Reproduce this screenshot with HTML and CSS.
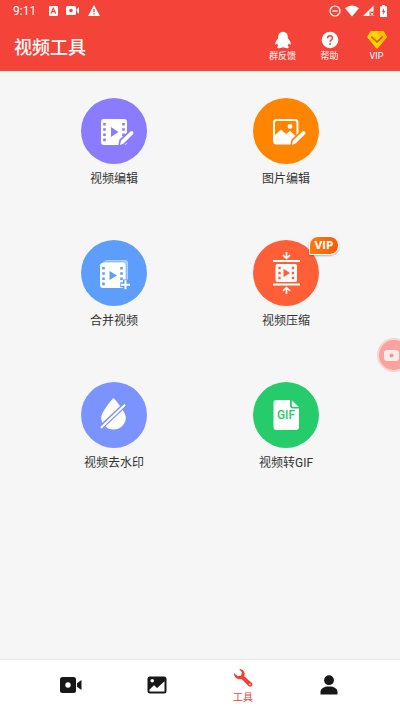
FILE: index.html
```html
<!DOCTYPE html>
<html lang="zh-CN">
<head>
<meta charset="utf-8">
<meta name="viewport" content="width=device-width, initial-scale=1">
<title>视频工具</title>
<link rel="stylesheet" href="styles.css">
</head>
<body>
<header class="header">
  <div class="status">
    <div class="status-left">
      <span class="time">9:11</span>
      <svg width="10" height="12" viewBox="0 0 10 12"><rect x="1" y="1" width="9" height="10" rx="1" fill="#fff"/><path d="M3 8.5 5.3 3.2 7.8 8.5M4 6.6H7" fill="none" stroke="#f44338" stroke-width="1.1"/></svg>
      <svg width="14" height="12" viewBox="0 0 14 12"><rect x="0" y="1" width="10" height="9" rx="1.5" fill="#fff"/><circle cx="5" cy="5.5" r="1.8" fill="#f44338"/><path d="M10.8 4.2 13 2V9L10.8 6.8Z" fill="#fff"/></svg>
      <svg width="12" height="12" viewBox="0 0 12 12"><path d="M6 0 12 11H0Z" fill="#fff"/><path d="M6 4V7.2M6 8.2V9.6" stroke="#f44338" stroke-width="1.3"/></svg>
    </div>
    <div class="status-right">
      <svg width="12" height="12" viewBox="0 0 12 12"><circle cx="6" cy="6" r="5" fill="none" stroke="#fff" stroke-width="1.2"/><path d="M3.4 6H8.6" stroke="#fff" stroke-width="1.3"/></svg>
      <svg width="14" height="12" viewBox="0 0 14 12"><path d="M0 3.2Q7-2 14 3.2L7 11.5Z" fill="#fff"/></svg>
      <svg width="11" height="12" viewBox="0 0 11 12"><path d="M10.5 0.5V6.5H6.5V11H0Z" fill="#fff"/><path d="M7.6 7.7 10.4 10.8M10.4 7.7 7.6 10.8" stroke="#fff" stroke-width="1"/></svg>
      <svg class="battery" width="7" height="12" viewBox="0 0 7 12"><path d="M2.2 0H4.8V1.2H6.2Q7 1.2 7 2V11.2Q7 12 6.2 12H.8Q0 12 0 11.2V2Q0 1.2.8 1.2H2.2Z" fill="#fff"/><path d="M4 3 2 7H3.2V10L5.2 6H4Z" fill="#f44338"/></svg>
    </div>
  </div>
  <div class="appbar">
    <h1>视频工具</h1>
    <div class="actions">
      <button class="action" type="button">
        <svg width="18" height="18" viewBox="0 0 18 18"><path d="M9 .8C5.8.8 4.2 3 4.2 5.6V7.2C3 8.7 1 11 1.2 13.2 1.4 14.2 2.5 13.4 3.2 12.2 3.4 13.2 3.8 14 4.5 14.7 2.7 15.5 2.7 17.2 5 17.2 7 17.2 8.2 16.6 9 16.1 9.8 16.6 11 17.2 13 17.2 15.3 17.2 15.3 15.5 13.5 14.7 14.2 14 14.6 13.2 14.8 12.2 15.5 13.4 16.6 14.2 16.8 13.2 17 11 15 8.7 13.8 7.2V5.6C13.8 3 12.2.8 9 .8Z" fill="#fff"/></svg>
        <span>群反馈</span>
      </button>
      <button class="action" type="button">
        <svg width="18" height="18" viewBox="0 0 18 18"><circle cx="9" cy="9" r="8.3" fill="#fff"/><path d="M6.6 7.2C6.6 4 11.5 4.1 11.5 7 11.5 8.8 9.1 8.8 9.1 10.8" fill="none" stroke="#f44338" stroke-width="1.5"/><circle cx="9.1" cy="12.9" r="1" fill="#f44338"/></svg>
        <span>帮助</span>
      </button>
      <button class="action" type="button">
        <svg width="20" height="18" viewBox="0 0 20 18"><path d="M4.4 0H15.6Q16.4 0 16.8.6L19.4 5Q20 6 19.2 6.9L11 17Q10 18 9 17L.8 6.9Q0 6 .6 5L3.2.6Q3.6 0 4.4 0Z" fill="#ffd400"/><path d="M11 0H15.6Q16.4 0 16.8.6L19.4 5Q20 6 19.2 6.9L14 13Z" fill="#ffbd00"/><path d="M4.8 6 10 11 15.2 6" fill="none" stroke="#d9541a" stroke-width="1.7" stroke-linecap="round" stroke-linejoin="round"/></svg>
        <span>VIP</span>
      </button>
    </div>
  </div>
</header>

<main class="tools">
  <a class="tool" href="#edit-video">
    <span class="disc violet">
      <svg viewBox="0 0 66 66"><rect x="20" y="21" width="26" height="26" rx="3" fill="#fff"/><path d="M23.5 25V44M42.5 25V38" stroke="#8a7bff" stroke-width="2.6" stroke-dasharray="2.6 2.6"/><path d="M30 29 37.5 34 30 39Z" fill="#8a7bff"/><path d="M39 47 40 42.5 49.5 33.5Q51 32.5 52 33.8 53 35 52 36.2L42.5 45.5Z" fill="#fff" stroke="#8a7bff" stroke-width="3.4"/><path d="M39 47 40 42.5 49.5 33.5Q51 32.5 52 33.8 53 35 52 36.2L42.5 45.5Z" fill="#fff"/></svg>
    </span>
    <span class="label">视频编辑</span>
  </a>
  <a class="tool" href="#edit-image">
    <span class="disc orange">
      <svg viewBox="0 0 66 66"><rect x="21" y="22" width="23.5" height="23.5" rx="2.5" fill="none" stroke="#fff" stroke-width="2"/><path d="M21 38 28 31.5 33 36 37 33 44 39V45H21Z" fill="#fff"/><circle cx="37" cy="28.5" r="2.4" fill="#fff"/><path d="M39 47 40 42.5 49.5 33.5Q51 32.5 52 33.8 53 35 52 36.2L42.5 45.5Z" fill="#fff" stroke="#ff8400" stroke-width="3.4"/><path d="M39 47 40 42.5 49.5 33.5Q51 32.5 52 33.8 53 35 52 36.2L42.5 45.5Z" fill="#fff"/></svg>
    </span>
    <span class="label">图片编辑</span>
  </a>
  <a class="tool" href="#merge">
    <span class="disc blue">
      <svg viewBox="0 0 66 66"><rect x="23" y="20" width="24" height="24" rx="3" fill="#b0d0ff"/><rect x="21" y="21.5" width="24.5" height="24.5" rx="3" fill="#d3e5ff" stroke="#5d9efc" stroke-width=".5"/><rect x="19" y="23" width="25" height="25" rx="3" fill="#fff"/><path d="M22.5 27V46M40.5 27V41" stroke="#5d9efc" stroke-width="2.6" stroke-dasharray="2.6 2.6"/><path d="M28.5 31 36 35.5 28.5 40Z" fill="#5d9efc"/><path d="M44.5 39.5V50M39.3 44.8H49.7" stroke="#5d9efc" stroke-width="5"/><path d="M44.5 40.2V49.2M40 44.7H49" stroke="#fff" stroke-width="2"/></svg>
    </span>
    <span class="label">合并视频</span>
  </a>
  <a class="tool" href="#compress">
    <span class="disc coral">
      <svg viewBox="0 0 66 66"><path d="M20 21H47M20 44.5H47" stroke="#fff" stroke-width="2"/><path d="M33.5 12V18M30 15.2 33.5 18.5 37 15.2M33.5 54V48M30 50.8 33.5 47.5 37 50.8" fill="none" stroke="#fff" stroke-width="1.6"/><rect x="22.5" y="24" width="21.5" height="18" rx="2" fill="#fff"/><path d="M26.5 26.8V40M40 26.8V40" stroke="#ff5f36" stroke-width="2.4" stroke-dasharray="2.5 2.5"/><path d="M30.5 28.8 37 33 30.5 37.2Z" fill="#ff5f36"/></svg>
      <span class="badge">VIP</span>
    </span>
    <span class="label">视频压缩</span>
  </a>
  <a class="tool" href="#watermark">
    <span class="disc periwinkle">
      <svg viewBox="0 0 66 66"><path d="M32.5 16C34.5 18 44.8 30 44.8 35.5A12.2 12 0 0 1 20.2 35.5C20.2 30 30.5 18 32.5 16Z" fill="#fff"/><path d="M19.5 45.8 44 22.8" stroke="#7b93ff" stroke-width="4.6"/><path d="M20.5 45.3 43.5 23.3" stroke="#fff" stroke-width="2" stroke-linecap="round"/></svg>
    </span>
    <span class="label">视频去水印</span>
  </a>
  <a class="tool" href="#gif">
    <span class="disc green">
      <svg viewBox="0 0 66 66"><path d="M23.5 18H37V23.5Q37 26.5 40 26.5H46V45Q46 48 43 48H23.5Q20.5 48 20.5 45V21Q20.5 18 23.5 18Z" fill="#fff"/><path d="M38.8 18.2 45.8 25H40.5Q38.8 25 38.8 23.3Z" fill="#fff"/></svg>
      <span class="gif">GIF</span>
    </span>
    <span class="label">视频转GIF</span>
  </a>
</main>

<button class="recorder" type="button" aria-label="录屏">
  <svg width="34" height="34" viewBox="0 0 34 34"><circle cx="17" cy="17" r="16" fill="#f8a3a0" stroke="#fbd2d0" stroke-width="2"/><rect x="7" y="12" width="15" height="11" rx="3" fill="#fdeceb"/><circle cx="14.5" cy="17.5" r="2" fill="#f69490"/></svg>
</button>

<nav class="tabs">
  <a class="tab" href="#record" aria-label="录制">
    <svg width="22" height="18" viewBox="0 0 22 18"><rect x="0" y="1" width="16" height="16" rx="2.5" fill="#181818"/><circle cx="8" cy="9" r="2.7" fill="#fff"/><path d="M17 7.3 21.5 4V14L17 10.7Z" fill="#181818"/></svg>
  </a>
  <a class="tab" href="#gallery" aria-label="相册">
    <svg width="20" height="18" viewBox="0 0 20 18"><rect x=".5" y=".5" width="19" height="17" rx="2.5" fill="#181818"/><circle cx="5.2" cy="4.8" r="1.8" fill="#fff"/><path d="M2.5 15.5V13.5L7 9.3 10.2 12 17.5 5.2V15.5Z" fill="#fff"/></svg>
  </a>
  <a class="tab active" href="#tools" aria-current="page">
    <svg width="20" height="20" viewBox="0 0 20 20"><path d="M6.2 1C10.2.8 12.6 4.6 11.2 8.2L18.6 14.8A2.2 2.2 0 0 1 15.4 18L8.6 11C4.8 12.3.6 9.6 1 5L4.8 8.3 8.2 7.4 8.8 4.2Z" fill="#ee4035"/><circle cx="16.8" cy="16.4" r=".8" fill="#fff"/></svg>
    <span>工具</span>
  </a>
  <a class="tab" href="#me" aria-label="我的">
    <svg width="18" height="20" viewBox="0 0 18 20"><circle cx="9" cy="5.2" r="4.9" fill="#181818"/><path d="M.5 19.5V17C.5 13.4 4 11.5 9 11.5S17.5 13.4 17.5 17V19.5Z" fill="#181818"/></svg>
  </a>
</nav>
</body>
</html>
```
FILE: styles.css
```css
* {
  box-sizing: border-box;
}

body {
  margin: 0;
  min-height: 100vh;
  display: flex;
  flex-direction: column;
  background: #f6f6f6;
  color: #333;
  font-family: Roboto, "Noto Sans CJK SC", sans-serif;
}

svg {
  display: block;
}

a {
  color: inherit;
  text-decoration: none;
}

button {
  border: 0;
  padding: 0;
  background: none;
  color: inherit;
  font: inherit;
}

.header {
  background: #f44338;
  color: #fff;
}

.status {
  display: flex;
  justify-content: space-between;
  align-items: center;
  height: 22px;
  padding: 0 13px;
}

.status-left,
.status-right {
  display: flex;
  align-items: center;
}

.status-left {
  gap: 8px;
}

.status-right {
  gap: 4px;
}

.time {
  width: 27px;
  font-size: 12px;
  line-height: 20px;
}

.battery {
  margin-left: 2px;
}

.appbar {
  display: flex;
  justify-content: space-between;
  height: 49px;
  padding-left: 14px;
}

h1 {
  margin: 0;
  font-size: 18px;
  font-weight: 500;
  line-height: 52px;
}

.actions {
  display: flex;
  padding-top: 9px;
}

.action {
  display: flex;
  flex-direction: column;
  align-items: center;
  width: 47px;
  font-size: 9px;
  line-height: 14px;
}

.tools {
  flex: 1;
  display: grid;
  grid-template-columns: 1fr 1fr;
  align-content: start;
  row-gap: 46px;
  padding: 27px 28px;
}

.tool {
  display: flex;
  flex-direction: column;
  align-items: center;
}

.disc {
  position: relative;
  width: 66px;
  height: 66px;
  border-radius: 50%;
}

.violet { background: #8a7bff; }
.orange { background: #ff8400; }
.blue { background: #5d9efc; }
.coral { background: #ff5f36; }
.periwinkle { background: #7b93ff; }
.green { background: #26cb6c; }

.label {
  font-size: 12px;
  line-height: 30px;
}

.badge {
  position: absolute;
  top: -4px;
  left: 56px;
  width: 30px;
  border: 1px solid #fff;
  border-radius: 9px 9px 9px 1px;
  background: linear-gradient(90deg, #ff7a10, #fa5a08);
  box-shadow: 0 1px 2px #0004;
  color: #fff;
  font: bold 10px/17px "DejaVu Sans", sans-serif;
  text-align: center;
}

.gif {
  position: absolute;
  inset: 0;
  color: #26cb6c;
  font-size: 12px;
  font-weight: 500;
  line-height: 67px;
  text-align: center;
}

.recorder {
  position: fixed;
  top: 338px;
  right: -11px;
}

.tabs {
  display: flex;
  height: 51px;
  padding: 0 28px;
  border-top: 1px solid #e8e8e8;
  background: #fff;
}

.tab {
  flex: 1;
  display: flex;
  flex-direction: column;
  align-items: center;
  justify-content: center;
}

.active {
  gap: 2px;
  padding-top: 4px;
  color: #ee4035;
  font-size: 10px;
  line-height: 16px;
}
```
